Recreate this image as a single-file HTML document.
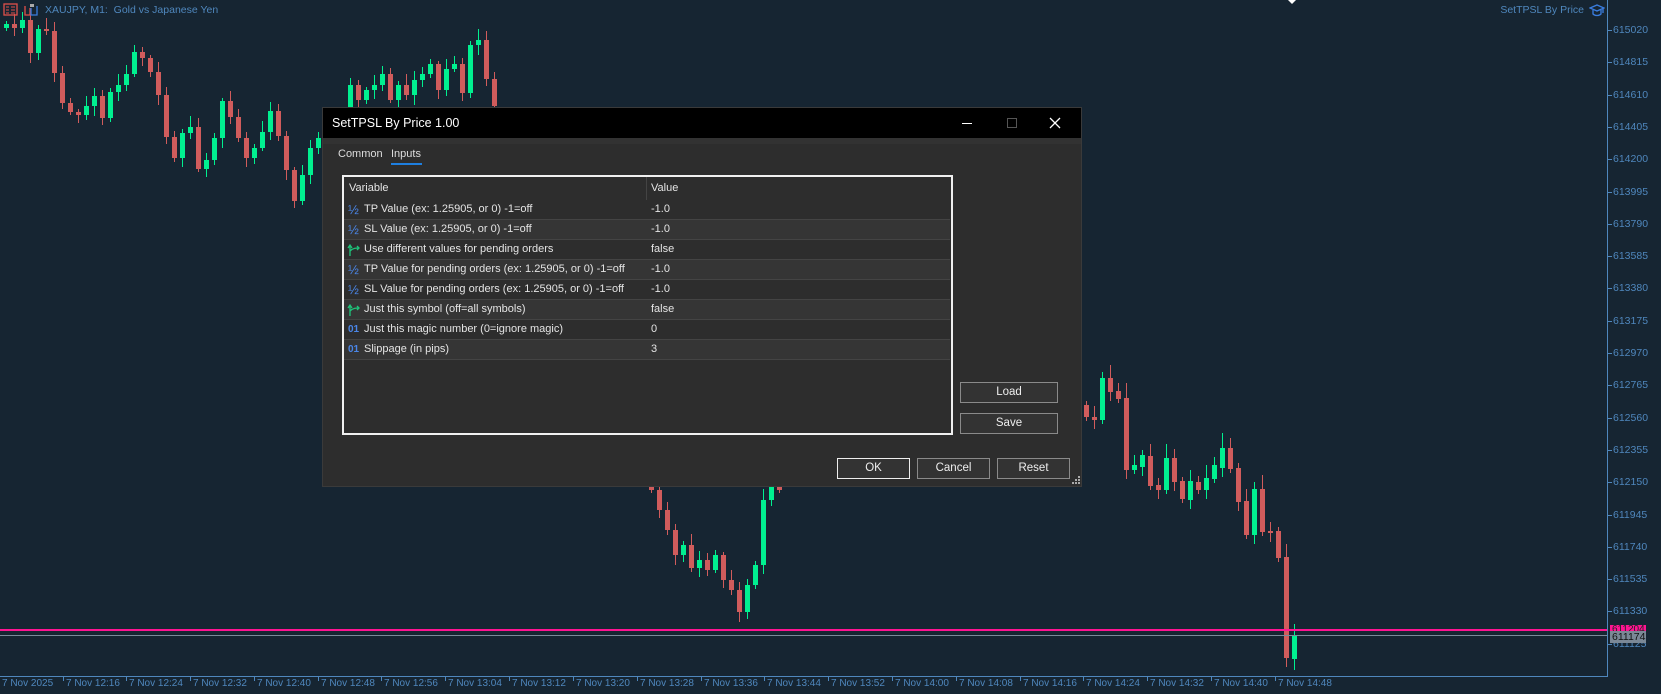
<!DOCTYPE html>
<html><head><meta charset="utf-8"><style>
*{margin:0;padding:0;box-sizing:border-box}
body{width:1661px;height:694px;background:#162532;position:relative;overflow:hidden;font-family:"Liberation Sans","DejaVu Sans",sans-serif}
.ab{position:absolute}
.pl{position:absolute;left:1613px;font-size:10.5px;color:#4f87bd;line-height:12px}
.pt{position:absolute;left:1607px;width:5px;height:1px;background:#4f87bd}
.tl{position:absolute;top:678px;font-size:10px;color:#4f87bd;white-space:nowrap}
.tt{position:absolute;top:676px;width:1px;height:5px;background:#4f87bd}
#dlg{position:absolute;left:322px;top:107px;width:760px;height:380px;background:#2d2d2d;border:1px solid #3a3a3a}
#tb{position:absolute;left:0;top:0;width:100%;height:30px;background:#000;color:#fff;font-size:12.5px;line-height:30px;padding-left:9px}
.row{position:absolute;left:0;width:606px;height:20px;border-bottom:1px solid #444;font-size:11px;color:#e4e4e4;line-height:19px}
.row span{position:absolute;white-space:nowrap}
.btn{position:absolute;height:21px;border:1px solid #8a8a8a;background:#333;color:#eee;font-size:11.5px;text-align:center;line-height:19px}
</style></head><body>
<svg id="ch" class="ab" style="left:0;top:0" width="1661" height="694"></svg>
<div class="ab" style="left:1607px;top:0;width:1px;height:677px;background:#4f87bd"></div>
<div class="ab" style="left:0;top:676px;width:1608px;height:1px;background:#4f87bd"></div>
<div class="ab" style="left:0;top:629px;width:1607px;height:2px;background:#ff1493"></div>
<div class="ab" style="left:0;top:635px;width:1607px;height:1px;background:#7a8a99"></div>
<div id="axis"></div>
<div class="ab" style="left:1610px;top:625px;width:36px;height:9px;background:#ff1493;font-size:10px;color:#222;line-height:9px;overflow:hidden;padding-left:2px">611204</div>
<div class="ab" style="left:1610px;top:631px;width:36px;height:12px;background:#7b8896;font-size:10.5px;color:#111;line-height:12px;padding-left:2px">611174</div>
<svg class="ab" style="left:3px;top:3px" width="36" height="14">
<rect x="1" y="1" width="13" height="11" fill="none" stroke="#e0504a" stroke-width="1.3"/><path d="M3 4h3M3 7h3M3 10h3M8 4h4M8 7h4M8 10h4" stroke="#e0504a"/>
<path d="M22 3v9h5V5" fill="none" stroke="#e0504a" stroke-width="1.3"/><path d="M28 5v7h6V3" fill="none" stroke="#3a7de0" stroke-width="1.3"/><rect x="27" y="1" width="4" height="3" fill="#aaa"/>
</svg>
<div class="ab" style="left:45px;top:4px;font-size:10.5px;color:#4f87bd">XAUJPY, M1:&nbsp; Gold vs Japanese Yen</div>
<div class="ab" style="right:77px;top:4px;font-size:10.5px;color:#4f87bd">SetTPSL By Price</div>
<svg class="ab" style="left:1589px;top:4px" width="16" height="13"><path d="M1 4l7-3 7 3-7 3z" fill="none" stroke="#3a7de0" stroke-width="1.3"/><path d="M4 6v4c2 2 6 2 8 0V6M14 4v5" fill="none" stroke="#3a7de0" stroke-width="1.3"/></svg>
<div class="ab" style="left:1288px;top:0;width:8px;height:4px;background:#fff;clip-path:polygon(0 0,100% 0,50% 100%)"></div>

<div id="dlg">
<div id="tb">SetTPSL By Price 1.00</div>
<div class="ab" style="left:0;top:30px;width:100%;height:6px;background:#323232"></div>
<svg class="ab" style="left:639px;top:8px" width="110" height="14"><path d="M0 7.5h10" stroke="#fff"/><rect x="45.5" y="2.5" width="9" height="9" fill="none" stroke="#555"/><path d="M88 2l10 10M98 2l-10 10" stroke="#fff" stroke-width="1.3"/></svg>
<div class="ab" style="left:15px;top:38px;font-size:11px;color:#ddd;line-height:16px">Common</div>
<div class="ab" style="left:68px;top:38px;font-size:11px;color:#ddd;line-height:16px">Inputs</div>
<div class="ab" style="left:68px;top:55px;width:31px;height:2px;background:#1e7fe0"></div>
<div class="ab" style="left:19px;top:67px;width:611px;height:260px;border:2px solid #f0f0f0;background:#2d2d2d;overflow:hidden">
 <div class="ab" style="left:302px;top:0;width:1px;height:171px;background:#444"></div>
 <div class="row" style="top:0;height:23px;border:0"><span style="left:5px;top:2px">Variable</span><span style="left:307px;top:2px">Value</span></div>
 <div id="rows"></div>
</div>
<div class="btn" style="left:637px;top:274px;width:98px">Load</div>
<div class="btn" style="left:637px;top:305px;width:98px">Save</div>
<div class="btn" style="left:514px;top:350px;width:73px;border-color:#eee">OK</div>
<div class="btn" style="left:594px;top:350px;width:73px">Cancel</div>
<div class="btn" style="left:674px;top:350px;width:73px">Reset</div>
<svg class="ab" style="left:748px;top:367px" width="10" height="10"><g fill="#aaa"><rect x="7" y="1" width="2" height="2"/><rect x="4" y="4" width="2" height="2"/><rect x="7" y="4" width="2" height="2"/><rect x="1" y="7" width="2" height="2"/><rect x="4" y="7" width="2" height="2"/><rect x="7" y="7" width="2" height="2"/></g></svg>
</div>
<script>
var svg=document.getElementById('ch'),h='';
function cs(x0,open,cl){var o=open;cl.forEach(function(c,i){var x=x0+i*8,up=c<o,col=up?'#00f090':'#d05c5c',t=Math.min(o,c),b=Math.max(o,c);if(b-t<2)b=t+2;var wt=t-3-(i*7%9),wb=b+3+(i*5%8);h+='<rect x="'+x+'" y="'+wt+'" width="1" height="'+(wb-wt)+'" fill="'+col+'"/><rect x="'+(x-2)+'" y="'+t+'" width="5" height="'+(b-t)+'" fill="'+col+'"/>';o=c;});}
cs(6,28,[24,28,20,53,29,31,73,103,112,115,106,96,118,92,85,74,52,58,72,95,137,158,133,127,169,160,138,101,117,138,158,148,132,111,136,170,201,175,148,138,122,132,116,85,100,90,85,74,100,85,95,80,74,64,90,69,64,93,45,40,79,106]);
cs(651,470,[490,510,530,555,545,568,560,570,555,580,590,612,585,565,500,485,490]);
var C=[[1086,405,417],[1094,417,420],[1102,420,378],[1110,378,392],[1118,391,399],[1126,398,470],[1134,470,465],[1142,467,455],[1150,456,486],[1158,485,490],[1166,490,458],[1174,458,482],[1182,481,499],[1190,500,481],[1198,482,490],[1206,490,478],[1214,479,465],[1222,468,448],[1230,448,469],[1238,468,502],[1246,501,535],[1254,535,489],[1262,489,532],[1270,531,533],[1278,531,558],[1286,557,658],[1294,659,635]];
C.forEach(function(c,i){var up=c[2]<c[1],col=up?'#00f090':'#d05c5c',t=Math.min(c[1],c[2]),b=Math.max(c[1],c[2]);if(b-t<2)b=t+2;var wt=t-4-(i*7%12),wb=b+4+(i*5%10);if(i==26){wt=624;wb=670}if(i==25){wt=544}h+='<rect x="'+c[0]+'" y="'+wt+'" width="1" height="'+(wb-wt)+'" fill="'+col+'"/><rect x="'+(c[0]-2)+'" y="'+t+'" width="5" height="'+(b-t)+'" fill="'+col+'"/>';});
svg.innerHTML=h;
var P=[615020,614815,614610,614405,614200,613995,613790,613585,613380,613175,612970,612765,612560,612355,612150,611945,611740,611535,611330,611125],a='';
P.forEach(function(p,i){var y=30+i*32.3;a+='<div class="pt" style="top:'+Math.round(y)+'px"></div><div class="pl" style="top:'+Math.round(y-6)+'px">'+p+'</div>';});
var T=['7 Nov 2025','7 Nov 12:16','7 Nov 12:24','7 Nov 12:32','7 Nov 12:40','7 Nov 12:48','7 Nov 12:56','7 Nov 13:04','7 Nov 13:12','7 Nov 13:20','7 Nov 13:28','7 Nov 13:36','7 Nov 13:44','7 Nov 13:52','7 Nov 14:00','7 Nov 14:08','7 Nov 14:16','7 Nov 14:24','7 Nov 14:32','7 Nov 14:40','7 Nov 14:48'];
T.forEach(function(t,i){var x=-1.3+i*63.8;if(i>0)a+='<div class="tt" style="left:'+Math.round(x)+'px"></div>';a+='<div class="tl" style="left:'+Math.round(x+3)+'px">'+t+'</div>';});
document.getElementById('axis').innerHTML=a;
var R=[['h','TP Value (ex: 1.25905, or 0) -1=off','-1.0'],['h','SL Value (ex: 1.25905, or 0) -1=off','-1.0'],['b','Use different values for pending orders','false'],['h','TP Value for pending orders (ex: 1.25905, or 0) -1=off','-1.0'],['h','SL Value for pending orders (ex: 1.25905, or 0) -1=off','-1.0'],['b','Just this symbol (off=all symbols)','false'],['i','Just this magic number (0=ignore magic)','0'],['i','Slippage (in pips)','3']],r='';
R.forEach(function(x,i){var ic=x[0]=='h'?'<span style="left:4px;top:0;color:#4a86e8;font-size:13px">½</span>':x[0]=='b'?'<svg style="position:absolute;left:3px;top:3px" width="14" height="14"><path d="M3 13V3M1 5l2-3 2 3M3 8c3-3 6-3 9-3M10 3l2 2-2 2" fill="none" stroke="#1fc37a" stroke-width="1.3"/></svg>':'<span style="left:4px;top:0;color:#4a86e8;font-size:10px;font-weight:bold">01</span>';
r+='<div class="row" style="top:'+(23+i*20)+'px;background:'+(i%2?'#353535':'#2d2d2d')+'">'+ic+'<span style="left:20px">'+x[1]+'</span><span style="left:307px">'+x[2]+'</span></div>';});
document.getElementById('rows').innerHTML=r;
</script>
</body></html>
